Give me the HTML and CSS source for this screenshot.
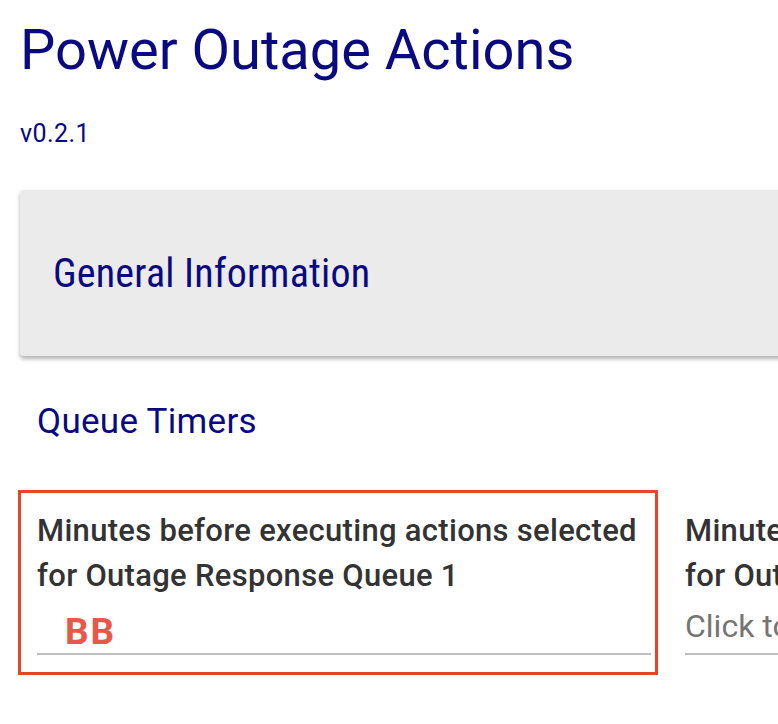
FILE: index.html
```html
<!DOCTYPE html>
<html lang="en">
<head>
    <meta charset="UTF-8">
    <title>Power Outage Actions</title>
<link rel="stylesheet" href="styles.css">
</head>
<body>

<div class="page">
    <h1>Power Outage Actions</h1>
    <div class="version">v0.2.1</div>

    <div class="section-card">
        <h2>General Information</h2>
    </div>

    <h3 class="group-title">Queue Timers</h3>

    <div class="timers">
        <div class="field selected">
            <label>Minutes before executing actions selected for Outage Response Queue 1</label>
            <div class="value"><span class="typed">BB</span></div>
        </div>
        <div class="field">
            <label>Minutes before executing actions selected for Outage Response Queue 2</label>
            <div class="value"><span class="placeholder">Click to enter minutes</span></div>
        </div>
    </div>
</div>

</body>
</html>
```

FILE: styles.css
```css
body {
    margin: 0;
    font-family: Roboto, 'Liberation Sans', sans-serif;
    background-color: white;
    overflow: hidden;
}
.page {
    width: 1400px;
    padding-left: 20px;
}
h1 {
    font-size: 56px;
    font-weight: 400;
    line-height: 1.2;
    color: #0a0a80;
    margin: 17px 0 0 0;
}
.version {
    font-size: 25px;
    letter-spacing: 0.4px;
    color: #0a0a80;
    margin-top: 35px;
}
.section-card {
    background: #ebebeb;
    border-radius: 4px;
    box-shadow: 0 3px 4px rgba(0, 0, 0, 0.3);
    height: 166px;
    margin-top: 42px;
    padding-left: 33px;
    display: flex;
    align-items: center;
}
.section-card h2 {
    font-size: 40px;
    font-weight: 400;
    font-stretch: 85%;
    letter-spacing: 0.2px;
    color: #0a0a80;
    margin: 0;
}
.group-title {
    font-size: 35px;
    font-weight: 400;
    letter-spacing: 0.3px;
    color: #0a0a80;
    margin: 45px 0 0 17px;
}
.timers {
    display: flex;
    gap: 8px;
    margin-top: 48px;
    margin-left: -2px;
}
.field {
    width: 614px;
    padding: 15px 4px 17px 16px;
    border: 3px solid transparent;
}
.field.selected {
    border-color: #e8432b;
}
.field label {
    display: block;
    font-size: 31px;
    font-weight: 500;
    letter-spacing: 0.3px;
    line-height: 45px;
    color: #333;
}
.value {
    height: 55px;
    border-bottom: 2px solid #bdbdbd;
    display: flex;
    align-items: flex-end;
}
.typed {
    font-size: 37px;
    font-weight: 700;
    letter-spacing: 2px;
    color: #e8584a;
    padding-left: 28px;
}
.placeholder {
    font-size: 32px;
    font-weight: 400;
    color: #757575;
    margin-bottom: 8px;
    white-space: nowrap;
}
```
